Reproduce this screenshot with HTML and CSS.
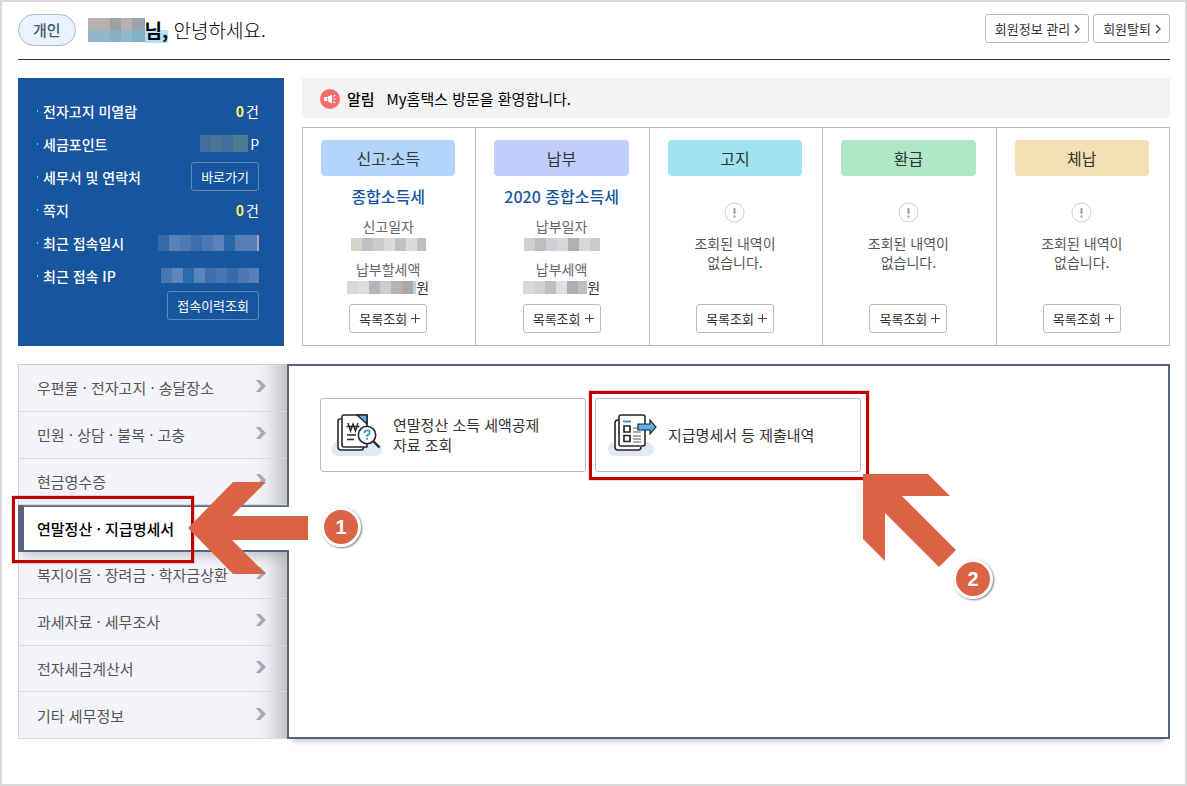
FILE: index.html
```html
<!DOCTYPE html>
<html lang="ko">
<head>
<meta charset="utf-8">
<meta name="viewport" content="width=device-width, initial-scale=1">
<title>My홈택스</title>
<link rel="stylesheet" href="styles.css">
</head>
<body>
<div class="page">
  <header class="header">
    <span class="badge">개인</span>
    <h1 class="greeting"><span class="mask mask-name"></span><strong class="honorific">님,</strong> 안녕하세요.</h1>
    <div class="header-actions">
      <button class="btn" type="button">회원정보 관리
        <svg width="6" height="10" viewBox="0 0 6 10"><path d="M1 1l4 4-4 4" fill="none" stroke="#444" stroke-width="1.3"/></svg></button>
      <button class="btn" type="button">회원탈퇴
        <svg width="6" height="10" viewBox="0 0 6 10"><path d="M1 1l4 4-4 4" fill="none" stroke="#444" stroke-width="1.3"/></svg></button>
    </div>
  </header>

  <section class="summary">
    <dl class="profile">
      <div class="profile-row"><dt>전자고지 미열람</dt><dd><b class="count">0</b>건</dd></div>
      <div class="profile-row"><dt>세금포인트</dt><dd><span class="mask mask-point"></span>P</dd></div>
      <div class="profile-row"><dt>세무서 및 연락처</dt><dd><button class="btn btn-dark" type="button">바로가기</button></dd></div>
      <div class="profile-row"><dt>쪽지</dt><dd><b class="count">0</b>건</dd></div>
      <div class="profile-row"><dt>최근 접속일시</dt><dd><span class="mask mask-time"></span></dd></div>
      <div class="profile-row"><dt>최근 접속 IP</dt><dd><span class="mask mask-ip"></span></dd></div>
      <div class="profile-action"><button class="btn btn-dark" type="button">접속이력조회</button></div>
    </dl>

    <div class="status">
      <div class="notice">
        <svg width="20" height="20" viewBox="0 0 20 20"><circle cx="10" cy="10" r="10" fill="#f96a6b"/><path d="M4 8h3v4H4zM7.6 7.8L12 5.6v8.8l-4.400-2.200z" fill="#fff"/><path d="M13.400 7.200l2-.8M13.400 10h2.400M13.400 12.800l2 .8" stroke="#fff" stroke-width="1.200"/></svg>
        <strong>알림</strong><span class="notice-text">My홈택스 방문을 환영합니다.</span>
      </div>
      <div class="cards">
        <article class="card">
          <h2 class="tag tag-blue">신고·소득</h2>
          <h3 class="tax">종합소득세</h3>
          <div class="label">신고일자</div><div class="value"><span class="mask mask-a"></span></div>
          <div class="label">납부할세액</div><div class="value"><span class="mask mask-b"></span>원</div>
          <button class="btn btn-list" type="button">목록조회 <svg width="9" height="9" viewBox="0 0 9 9"><path d="M4.500 0v9M0 4.500h9" stroke="#444"/></svg></button>
        </article>
        <article class="card">
          <h2 class="tag tag-violet">납부</h2>
          <h3 class="tax">2020 종합소득세</h3>
          <div class="label">납부일자</div><div class="value"><span class="mask mask-c"></span></div>
          <div class="label">납부세액</div><div class="value"><span class="mask mask-d"></span>원</div>
          <button class="btn btn-list" type="button">목록조회 <svg width="9" height="9" viewBox="0 0 9 9"><path d="M4.500 0v9M0 4.500h9" stroke="#444"/></svg></button>
        </article>
        <article class="card">
          <h2 class="tag tag-cyan">고지</h2>
          <svg class="alert" width="21" height="21" viewBox="0 0 21 21"><circle cx="10.500" cy="10.500" r="9.500" fill="#fff" stroke="#ccc"/><path d="M10.500 6v6M10.500 13.500v2" stroke="#999" stroke-width="2"/></svg>
          <p class="empty">조회된 내역이<br>없습니다.</p>
          <button class="btn btn-list" type="button">목록조회 <svg width="9" height="9" viewBox="0 0 9 9"><path d="M4.500 0v9M0 4.500h9" stroke="#444"/></svg></button>
        </article>
        <article class="card">
          <h2 class="tag tag-green">환급</h2>
          <svg class="alert" width="21" height="21" viewBox="0 0 21 21"><circle cx="10.500" cy="10.500" r="9.500" fill="#fff" stroke="#ccc"/><path d="M10.500 6v6M10.500 13.500v2" stroke="#999" stroke-width="2"/></svg>
          <p class="empty">조회된 내역이<br>없습니다.</p>
          <button class="btn btn-list" type="button">목록조회 <svg width="9" height="9" viewBox="0 0 9 9"><path d="M4.500 0v9M0 4.500h9" stroke="#444"/></svg></button>
        </article>
        <article class="card">
          <h2 class="tag tag-sand">체납</h2>
          <svg class="alert" width="21" height="21" viewBox="0 0 21 21"><circle cx="10.500" cy="10.500" r="9.500" fill="#fff" stroke="#ccc"/><path d="M10.500 6v6M10.500 13.500v2" stroke="#999" stroke-width="2"/></svg>
          <p class="empty">조회된 내역이<br>없습니다.</p>
          <button class="btn btn-list" type="button">목록조회 <svg width="9" height="9" viewBox="0 0 9 9"><path d="M4.500 0v9M0 4.500h9" stroke="#444"/></svg></button>
        </article>
      </div>
    </div>
  </section>

  <section class="workspace">
    <nav>
      <ul class="menu">
        <li><a href="#">우편물 · 전자고지 · 송달장소<svg width="10" height="12" viewBox="0 0 10 12"><path d="M0 0h4l6 6-6 6H0l5-6z" fill="#a5aab6"/></svg></a></li>
        <li><a href="#">민원 · 상담 · 불복 · 고충<svg width="10" height="12" viewBox="0 0 10 12"><path d="M0 0h4l6 6-6 6H0l5-6z" fill="#a5aab6"/></svg></a></li>
        <li><a href="#">현금영수증<svg width="10" height="12" viewBox="0 0 10 12"><path d="M0 0h4l6 6-6 6H0l5-6z" fill="#a5aab6"/></svg></a></li>
        <li class="active"><a href="#" aria-current="page">연말정산 · 지급명세서</a>
          <span class="frame frame-menu"></span>
          <svg class="arrow arrow-left" width="120" height="92" viewBox="0 0 120 92"><path d="M0 46L45 0h33L44 34h76v24H44l34 34H45z" fill="#d96344"/></svg>
          <span class="step step-one">1</span>
        </li>
        <li><a href="#">복지이음 · 장려금 · 학자금상환<svg width="10" height="12" viewBox="0 0 10 12"><path d="M0 0h4l6 6-6 6H0l5-6z" fill="#a5aab6"/></svg></a></li>
        <li><a href="#">과세자료 · 세무조사<svg width="10" height="12" viewBox="0 0 10 12"><path d="M0 0h4l6 6-6 6H0l5-6z" fill="#a5aab6"/></svg></a></li>
        <li><a href="#">전자세금계산서<svg width="10" height="12" viewBox="0 0 10 12"><path d="M0 0h4l6 6-6 6H0l5-6z" fill="#a5aab6"/></svg></a></li>
        <li><a href="#">기타 세무정보<svg width="10" height="12" viewBox="0 0 10 12"><path d="M0 0h4l6 6-6 6H0l5-6z" fill="#a5aab6"/></svg></a></li>
      </ul>
    </nav>
    <div class="panel">
      <div class="shortcut-cell">
        <a class="shortcut" href="#">
          <svg width="52" height="42" viewBox="0 0 52 42">
            <rect y="28" width="51" height="14" rx="7" fill="#e2e9f6"/>
            <g fill="#fff" stroke="#26272b" stroke-width="1.600" stroke-linejoin="round">
              <path d="M11 5H9q-2 0-2 2v26q0 3 3 3h20q2 0 3-3"/>
              <path d="M13 1h23v32H13q-2 0-2-2V3q0-2 2-2z"/>
              <path d="M26 1h10v9z" fill="#5db2f2"/>
            </g>
            <path d="M17 9l2.500 8 2.500-7 2.500 7L27 9M15.500 12.500h13" fill="none" stroke="#26272b" stroke-width="1.400"/>
            <path d="M16 21h9M16 25.500h7" stroke="#26272b" stroke-width="1.400"/>
            <circle cx="36" cy="21" r="8.700" fill="#fff" stroke="#26272b" stroke-width="1.600"/>
            <path d="M42.500 27.500l6 6" stroke="#26272b" stroke-width="2.400"/>
            <path d="M33.500 19q0-2.600 2.600-2.600t2.600 2.300q0 1.300-1.400 2t-1.300 2M36 24v1.800" fill="none" stroke="#3498e0" stroke-width="1.900"/>
          </svg>
          <span>연말정산 소득 세액공제<br>자료 조회</span>
        </a>
      </div>
      <div class="shortcut-cell">
        <a class="shortcut" href="#">
          <svg width="52" height="42" viewBox="0 0 52 42">
            <rect x="2" y="28" width="46" height="14" rx="7" fill="#e2e9f6"/>
            <g fill="#fff" stroke="#26272b" stroke-width="1.600" stroke-linejoin="round">
              <path d="M13 6h-1q-3 0-3 3v24q0 3 3 3h20q3 0 3-3"/>
              <path d="M15 1h22q2 0 2 2v27q0 2-2 2H15q-2 0-2-2V3q0-2 2-2z"/>
            </g>
            <path d="M17 7.500h8" stroke="#2288cf" stroke-width="1.800"/>
            <path d="M18 12h6v6h-6zM18 21.500h6v6h-6z" fill="#fff" stroke="#26272b" stroke-width="1.700"/>
            <path d="M27 14h8M27 18h8M27 22h8M27 25h8M27 28h8" stroke="#55585e"/>
            <path d="M32 10h12V6l6 7-6 7v-4H32z" fill="#5db2f2" stroke="#26272b" stroke-width="1.200"/>
          </svg>
          <span>지급명세서 등 제출내역</span>
        </a>
        <span class="frame frame-card"></span>
        <svg class="arrow arrow-up" width="93" height="93" viewBox="0 0 93 93"><path d="M0 0h65l22 22H39l54 54-17 17-54-54v48L0 65z" fill="#d96344"/></svg>
        <span class="step step-two">2</span>
      </div>
    </div>
  </section>
</div>
</body>
</html>
```
FILE: styles.css
```css
* { box-sizing: border-box; }

body {
  margin: 0;
  background: #fff;
  color: #333;
  font-family: "Noto Sans CJK KR", "Noto Sans", sans-serif;
  font-size: 14px;
}

h1, h2, h3, p, dl, dd, ul { margin: 0; padding: 0; }
a { color: inherit; text-decoration: none; }
svg { flex: none; }

.page {
  min-height: 100vh;
  border: 2px solid #d9d9d9;
  padding: 0 15px 16px 16px;
}

/* header */
.header {
  display: flex;
  align-items: flex-start;
  padding: 12px 0 13px;
  border-bottom: 1px solid #333;
}

.badge {
  padding: 0 14px;
  border: 1px solid #a9bbd8;
  border-radius: 16px;
  background: #e8f3ff;
  color: #475970;
  font-size: 15px;
  font-weight: 500;
  line-height: 30px;
}

.greeting {
  display: flex;
  align-items: center;
  margin-left: 12px;
  color: #000;
  font-size: 19px;
  font-weight: 300;
  line-height: 32px;
  white-space: pre;
}

.honorific {
  background-image: linear-gradient(#b5e0f7, #b5e0f7);
  background-position: 0 16px;
  background-size: 100% 13px;
  background-repeat: no-repeat;
  font-weight: 700;
}

.header-actions {
  display: flex;
  gap: 4px;
  margin-left: auto;
}

.btn {
  display: inline-flex;
  align-items: center;
  gap: 4px;
  height: 29px;
  padding: 0 8px 0 9px;
  border: 1px solid #b9b9b9;
  border-radius: 3px;
  background: #fff;
  color: #333;
  font: 400 13px "Noto Sans CJK KR", sans-serif;
  white-space: nowrap;
}

/* pixelated private values */
.mask {
  display: inline-block;
  height: 13px;
}

.mask-name {
  width: 57px;
  height: 24px;
  background:
    linear-gradient(rgba(110, 190, 225, 0) 50%, rgba(110, 190, 225, .5) 50%),
    linear-gradient(90deg, #b8b0b0 0 22px, #9fa2a5 22px 33px, #b7b0b0 33px 44px, #9ba3b1 44px);
}

.mask-point {
  width: 48px;
  height: 17px;
  background: linear-gradient(90deg, #416e98 0 11px, #487694 11px 22px, #3f6e99 22px 33px, #4d7c91 33px);
}

.mask-time {
  width: 101px;
  height: 16px;
  background: linear-gradient(90deg, #3569aa 0 11px, #5881b8 11px 22px, #4d79b4 22px 33px, #3c6dad 33px 44px, #4b78b4 44px 55px, #5b83b9 55px 66px, #2667a9 66px 77px, #557eb7 77px 99px, #aaa3c8 99px);
}

.mask-ip {
  width: 98px;
  height: 15px;
  background: linear-gradient(90deg, #4977b3 0 11px, #5e86ba 11px 22px, #286aae 22px 33px, #5885bb 33px 44px, #3d6fb0 44px 55px, #4977b3 55px 66px, #366bac 66px 77px, #4b78b4 77px 88px, #597fb6 88px);
}

.mask-a {
  width: 75px;
  background: linear-gradient(90deg, #d5d2cc 0 11px, #bec0c6 11px 22px, #c9cccc 22px 33px, #dedad8 33px 44px, #bfc1c5 44px 55px, #dddad8 55px 66px, #bebfc3 66px);
}

.mask-b {
  width: 69px;
  background: linear-gradient(90deg, #dbd9d8 0 11px, #dedee0 11px 22px, #b4b6bc 22px 33px, #cdcdce 33px 44px, #b5b4b3 44px 55px, #aca8a5 55px 66px, #bed0e7 66px);
}

.mask-c {
  width: 76px;
  background: linear-gradient(90deg, #d2d0cb 0 11px, #bdbdbf 11px 22px, #cdd1d5 22px 33px, #d9d6d6 33px 44px, #b0b1b4 44px 55px, #d8d9da 55px 66px, #c9c9c8 66px);
}

.mask-d {
  width: 64px;
  background: linear-gradient(90deg, #d9d9da 0 11px, #d4d1cb 11px 22px, #bebfc1 22px 33px, #dedfe3 33px 44px, #aeafb2 44px 55px, #bfbfc0 55px);
}

/* summary */
.summary {
  display: flex;
  gap: 18px;
  margin-top: 18px;
}

.profile {
  flex: 0 0 266px;
  padding: 16px 25px 26px 19px;
  background: #17559e;
  color: #fff;
}

.profile-row {
  display: flex;
  align-items: center;
  justify-content: space-between;
  height: 33px;
}

.profile dt {
  display: flex;
  align-items: center;
  gap: 5px;
  font-weight: 500;
}

.profile dt::before {
  content: "";
  width: 1px;
  height: 2px;
  background: #9db9da;
}

.profile dd {
  display: flex;
  align-items: center;
  gap: 2px;
}

.count {
  color: #fff36b;
}

.btn-dark {
  padding: 0 9px;
  border-color: #5d88bc;
  background: transparent;
  color: #fff;
}

.profile-action {
  display: flex;
  justify-content: flex-end;
  margin-top: -1px;
}

.status {
  flex: 1;
  display: flex;
  flex-direction: column;
  gap: 9px;
}

.notice {
  display: flex;
  align-items: center;
  height: 40px;
  padding: 0 18px;
  background: #f3f3f3;
  color: #000;
}

.notice svg { margin-top: 2px; }

.notice strong {
  margin: 0 12px 0 7px;
  font-weight: 500;
  font-size: 15px;
}

.notice-text { font-size: 15px; }

.cards {
  flex: 1;
  display: grid;
  grid-template-columns: repeat(5, 1fr);
  border: solid #b9b9b9;
  border-width: 1px 0 1px 1px;
}

.card {
  display: flex;
  flex-direction: column;
  align-items: center;
  padding: 12px 20px 12px 18px;
  border-right: 1px solid #b9b9b9;
  text-align: center;
}

.tag {
  width: 100%;
  border-radius: 4px;
  color: #333;
  font-size: 16px;
  font-weight: 400;
  line-height: 36px;
}

.tag-blue { background: #b2d5fb; }
.tag-violet { background: #bfcffa; }
.tag-cyan { background: #9fe4f0; }
.tag-green { background: #b0e8c7; }
.tag-sand { background: #f3e1b5; }

.tax {
  margin: 8px 0;
  color: #17559e;
  font-size: 16px;
  font-weight: 500;
  line-height: 24px;
  white-space: nowrap;
}

.label {
  color: #666;
  line-height: 20px;
}

.value {
  display: flex;
  align-items: center;
  height: 16px;
  margin-bottom: 7px;
  line-height: 16px;
}

.btn-list {
  margin-top: auto;
  padding: 0 6px 0 9px;
}

.alert { margin-top: 26px; }

.empty {
  margin-top: 11px;
  color: #555;
  line-height: 19px;
}

/* workspace */
.workspace {
  display: flex;
  margin-top: 18px;
}

.workspace nav { flex: 0 0 269px; }

.menu {
  display: grid;
  grid-template-rows: repeat(8, 1fr);
  height: 100%;
  border-top: 1px solid #ccc;
  border-left: 1px solid #ccc;
  list-style: none;
  background: linear-gradient(90deg, rgba(243, 244, 250, 1) 234px, #ebecf1 248px, #c6c6c8 266px);
}

.menu a {
  display: flex;
  align-items: center;
  justify-content: space-between;
  height: 100%;
  padding: 0 21px 0 18px;
  border-bottom: 1px solid #d9d9dc;
  color: #555;
  font-size: 15px;
}

.menu a svg { margin-bottom: 3px; }

.menu .active {
  position: relative;
  z-index: 2;
  margin-right: -2px;
  margin-left: -1px;
}

.menu .active a {
  padding-left: 13px;
  border: solid #56637e;
  border-width: 2px 0 2px 6px;
  background: #fff;
  box-shadow: 0 8px 12px -4px rgba(0, 0, 0, .2);
  color: #000;
  font-weight: 500;
  clip-path: inset(0 0 -20px 0);
}

.panel {
  flex: 1;
  display: flex;
  align-items: flex-start;
  gap: 9px;
  min-height: 375px;
  padding: 32px 31px;
  border: 2px solid #56637e;
  background: #fff;
  box-shadow: 0 8px 6px -6px rgba(0, 0, 0, .25);
}

.shortcut-cell {
  position: relative;
  flex: 0 0 266px;
}

.shortcut {
  display: flex;
  align-items: center;
  gap: 10px;
  height: 74px;
  padding: 0 10px;
  border: 1px solid #b9b9b9;
  border-radius: 3px;
  color: #333;
  font-size: 15px;
  line-height: 20px;
}

/* guide marks laid over the screen */
.frame {
  position: absolute;
  border: 3px solid #c00000;
  box-shadow: 0 0 1px #c00000;
}

.frame-menu {
  top: -9px;
  left: -6px;
  width: 182px;
  height: 67px;
}

.frame-card {
  inset: -7px -8px -8px -6px;
}

.arrow { position: absolute; }
.arrow-left { top: -23px; left: 170px; }
.arrow-up { top: 76px; left: 268px; }

.step {
  position: absolute;
  width: 40px;
  border: 3px solid #fff;
  border-radius: 50%;
  background: #d96344;
  box-shadow: 1px 1px 2px rgba(0, 0, 0, .5);
  color: #fff;
  font: 700 20px/34px "Liberation Sans", sans-serif;
  text-align: center;
}

.step-one { top: 2px; left: 303px; }
.step-two { top: 161px; left: 358px; }
```
